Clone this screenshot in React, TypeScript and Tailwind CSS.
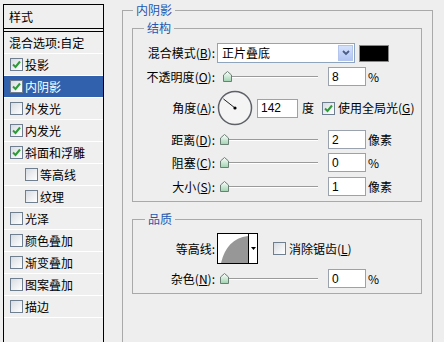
import React from 'react';

const font = "font-['Noto_Sans_CJK_SC',sans-serif]";

const Check: React.FC<{ checked?: boolean }> = ({ checked }) => (
  <span className="flex h-[13px] w-[13px] shrink-0 items-center justify-center border border-[#6f7f90] bg-gradient-to-br from-[#d8dce2] to-white">
    {checked && (
      <svg width="9" height="9" viewBox="0 0 9 9">
        <path d="M1 4.5 L3.5 7 L8 1.5" fill="none" stroke="#2f9a3a" strokeWidth="2" />
      </svg>
    )}
  </span>
);

const Key: React.FC<{ k: string }> = ({ k }) => (
  <>
    (<span className="underline">{k}</span>)
  </>
);

const styles: { name: string; checked: boolean; sub?: boolean; active?: boolean }[] = [
  { name: '投影', checked: true },
  { name: '内阴影', checked: true, active: true },
  { name: '外发光', checked: false },
  { name: '内发光', checked: true },
  { name: '斜面和浮雕', checked: true },
  { name: '等高线', checked: false, sub: true },
  { name: '纹理', checked: false, sub: true },
  { name: '光泽', checked: false },
  { name: '颜色叠加', checked: false },
  { name: '渐变叠加', checked: false },
  { name: '图案叠加', checked: false },
  { name: '描边', checked: false },
];

const Thumb = () => (
  <svg width="9" height="11" viewBox="0 0 9 11" className="shrink-0">
    <defs>
      <linearGradient id="tg" x1="0" y1="0" x2="0" y2="1">
        <stop offset="0" stopColor="#ffffff" />
        <stop offset="1" stopColor="#9fd3b0" />
      </linearGradient>
    </defs>
    <path d="M4.5 0.5 L8.5 4 L8.5 10.5 L0.5 10.5 L0.5 4 Z" fill="url(#tg)" stroke="#6b7f75" />
  </svg>
);

const Slider: React.FC<{ offset: number }> = ({ offset }) => (
  <div className="flex h-[12px] w-[101px] items-center">
    <div className="h-[2px] shrink-0" style={{ width: offset }} />
    <Thumb />
    <div className="h-[2px] flex-1 border-t border-[#9a9a9a] border-b border-b-white" />
  </div>
);

const NumBox: React.FC<{ value: string; w?: string }> = ({ value, w = 'w-[38px]' }) => (
  <div className={`${w} flex h-[19px] items-center border border-[#9aa3ad] bg-white pl-[3px] font-['Liberation_Sans',sans-serif] text-[12px]`}>
    {value}
  </div>
);

const Label: React.FC<{ children: React.ReactNode }> = ({ children }) => (
  <div className="w-[83px] shrink-0 pr-[1px] text-right">{children}</div>
);

const SliderRow: React.FC<{ label: React.ReactNode; offset: number; value: string; unit: string; className?: string }> = ({
  label,
  offset,
  value,
  unit,
  className = '',
}) => (
  <div className={`flex h-[19px] items-center ${className}`}>
    <Label>{label}</Label>
    <div className="ml-[1px]">
      <Slider offset={offset} />
    </div>
    <div className="ml-[10px]">
      <NumBox value={value} />
    </div>
    <span className="ml-[2px]">{unit}</span>
  </div>
);

const Dial = () => (
  <svg width="36" height="36" viewBox="0 0 36 36" className="shrink-0">
    <circle cx="18" cy="18" r="16.5" fill="#f4f4f4" stroke="#5e6168" strokeWidth="1.5" />
    <line x1="18" y1="18" x2="6.4" y2="8.9" stroke="#222" strokeWidth="1" />
    <circle cx="18" cy="18" r="1.6" fill="#000" />
  </svg>
);

export default function App() {
  return (
    <div className={`flex h-[342px] w-[444px] overflow-hidden bg-[#eeeeee] text-[12px] leading-[16px] text-black ${font}`}>
      {/* style list */}
      <div className="ml-[3px] mt-[4px] h-[360px] w-[101px] shrink-0 border border-black bg-[#efefef]">
        <div className="flex h-[24px] items-center border-b border-black pl-[5px]">样式</div>
        <div className="mt-[2px] border-t border-black">
          <div className="flex h-[22px] items-center border-b border-white pl-[5px]">混合选项:自定</div>
          {styles.map((s) => (
            <div
              key={s.name}
              className={`flex h-[22px] items-center gap-[2px] border-b border-white ${s.sub ? 'pl-[21px]' : 'pl-[6px]'} ${
                s.active ? 'bg-[#3161ac] text-white' : ''
              }`}
            >
              <Check checked={s.checked} />
              <span>{s.name}</span>
            </div>
          ))}
        </div>
      </div>

      {/* settings */}
      <fieldset className="ml-[18px] mt-[2px] h-[360px] w-[311px] shrink-0 border border-[#a9a9a9] px-[9px] pb-0 pt-[2px]">
        <legend className="ml-[1px] px-[3px] text-[#2457b0]">内阴影</legend>

        <fieldset className="w-[290px] border border-[#a9a9a9] px-0 pb-[5px] pt-[7px]">
          <legend className="ml-[11px] px-[3px] text-[#2457b0]">结构</legend>

          <div className="flex h-[20px] items-center">
            <Label>
              混合模式<Key k="B" />:
            </Label>
            <div className="ml-[1px] flex h-[20px] w-[138px] items-stretch border border-[#8fa4bd] bg-white">
              <div className="flex flex-1 items-center pl-[4px]">正片叠底</div>
              <div className="m-[1px] flex w-[15px] items-center justify-center border border-[#b3c5ec] bg-gradient-to-b from-[#d6e2fc] to-[#b2c6f3]">
                <svg width="8" height="6" viewBox="0 0 8 6">
                  <path d="M1 1 L4 4 L7 1" fill="none" stroke="#4a5d85" strokeWidth="1.8" />
                </svg>
              </div>
            </div>
            <div className="ml-[4px] h-[17px] w-[30px] border border-[#888] bg-black" />
          </div>

          <SliderRow className="mt-[4px]" label={<>不透明度<Key k="O" />:</>} offset={6} value="8" unit="%" />

          <div className="mt-[4px] flex h-[36px] items-center">
            <Label>
              角度<Key k="A" />:
            </Label>
            <div className="ml-[1px]">
              <Dial />
            </div>
            <div className="ml-[4px]">
              <NumBox value="142" w="w-[41px]" />
            </div>
            <span className="ml-[4px]">度</span>
            <div className="ml-[8px] flex items-center gap-[3px]">
              <Check checked />
              <span>
                使用全局光<Key k="G" />
              </span>
            </div>
          </div>

          <SliderRow className="mt-[4px]" label={<>距离<Key k="D" />:</>} offset={3} value="2" unit="像素" />
          <SliderRow className="mt-[4px]" label={<>阻塞<Key k="C" />:</>} offset={3} value="0" unit="%" />
          <SliderRow className="mt-[5px]" label={<>大小<Key k="S" />:</>} offset={3} value="1" unit="像素" />
        </fieldset>

        <fieldset className="mt-[9px] w-[290px] border border-[#a9a9a9] px-0 pb-[5px] pt-[6px]">
          <legend className="ml-[12px] px-[3px] text-[#2457b0]">品质</legend>

          <div className="flex h-[31px] items-center">
            <Label>等高线:</Label>
            <div className="ml-[1px] flex h-[31px] w-[41px] border border-black bg-white">
              <svg width="30" height="29" viewBox="0 0 30 29" className="shrink-0">
                <path d="M3 29 C 7 13, 15 4, 30 2 L30 29 Z" fill="#979797" />
              </svg>
              <div className="flex flex-1 items-center justify-center border-l border-black">
                <svg width="5" height="3" viewBox="0 0 5 3">
                  <path d="M0 0 L5 0 L2.5 3 Z" fill="#000" />
                </svg>
              </div>
            </div>
            <div className="ml-[15px] flex items-center gap-[3px]">
              <Check />
              <span>
                消除锯齿<Key k="L" />
              </span>
            </div>
          </div>

          <SliderRow className="mt-[5px]" label={<>杂色<Key k="N" />:</>} offset={3} value="0" unit="%" />
        </fieldset>
      </fieldset>
    </div>
  );
}
